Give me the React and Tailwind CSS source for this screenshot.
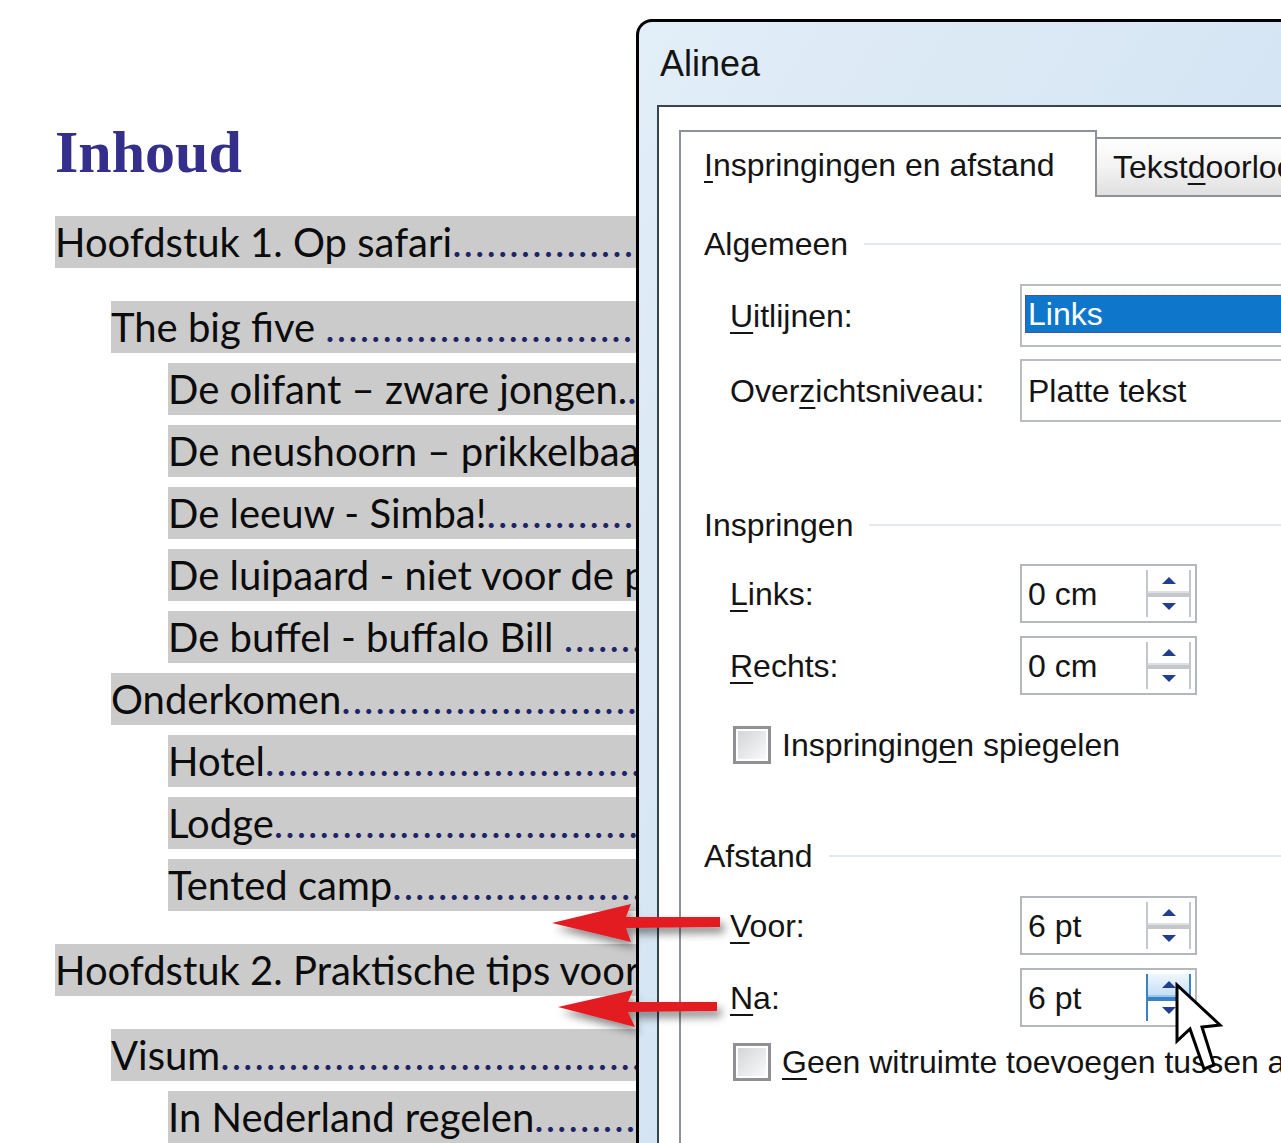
import React from 'react';

const tocItems = [
  { text: 'Hoofdstuk 1. Op safari', level: 0 },
  { text: 'The big five\u00a0', level: 1 },
  { text: 'De olifant – zware jongen.', level: 2 },
  { text: 'De neushoorn – prikkelbaar', level: 2 },
  { text: 'De leeuw - Simba!', level: 2 },
  { text: 'De luipaard - niet voor de poes', level: 2 },
  { text: 'De buffel - buffalo Bill\u00a0', level: 2 },
  { text: 'Onderkomen', level: 1 },
  { text: 'Hotel', level: 2 },
  { text: 'Lodge', level: 2 },
  { text: 'Tented camp', level: 2 },
  { text: 'Hoofdstuk 2. Praktische tips voor onderweg', level: 0 },
  { text: 'Visum', level: 1 },
  { text: 'In Nederland regelen', level: 2 },
];

const indent = ['ml-0', 'ml-[56px]', 'ml-[113px]'];

const Mn = ({ children }) => (
  <span className="underline decoration-[2px] underline-offset-[5px]">{children}</span>
);

const Toc = () => (
  <div className="w-[636px] shrink-0 overflow-hidden pl-[55px] pt-[122px]">
    <h1 className="text-[60px] leading-none font-bold text-[#352f8c] font-['Liberation_Serif',serif]">
      Inhoud
    </h1>
    <div className="flex flex-col font-['Lato',sans-serif] text-[40px] leading-none text-[#0c0c0c]">
      {tocItems.map((item, i) => {
        const prev = tocItems[i - 1];
        const wide = i === 0 || item.level === 0 || (prev && prev.level === 0);
        return (
          <div
            key={i}
            className={`h-[52px] flex items-center bg-[#cbcbcb] whitespace-nowrap overflow-hidden ${indent[item.level]} ${
              i === 0 ? 'mt-[34px]' : wide ? 'mt-[33px]' : 'mt-[10px]'
            }`}
          >
            <span>{item.text}</span>
            <span className="text-[#1e2466] tracking-[2px]">
              ..............................................
            </span>
          </div>
        );
      })}
    </div>
  </div>
);

const Spinner = ({ hover }) => (
  <div
    className={`h-full w-[45px] flex flex-col border-x-2 ${
      hover ? 'border-[#3b82c4]' : 'border-[#c4c8cc]'
    }`}
  >
    <div
      className={`flex-1 flex items-center justify-center border-b-2 ${
        hover ? 'bg-linear-to-b from-[#eef6fd] to-[#c6e0f6] border-[#9cc6ea]' : 'border-[#dde1e5]'
      }`}
    >
      <svg width="14" height="7" viewBox="0 0 14 7">
        <polygon points="0,7 7,0 14,7" fill="#20408f" />
      </svg>
    </div>
    <div className={`h-[4px] ${hover ? 'bg-[#3b82c4]' : 'bg-[#c4c8cc]'}`} />
    <div className="flex-1 flex items-center justify-center">
      <svg width="14" height="8" viewBox="0 0 14 8">
        <polygon points="0,0 14,0 7,7" fill="#20408f" />
      </svg>
    </div>
  </div>
);

const SpinBox = ({ value, hover }) => (
  <div className="h-full w-[177px] border-2 border-[#b4b8bd] flex items-center pl-[6px] pr-[4px] py-[4px]">
    <span className="flex-1">{value}</span>
    <Spinner hover={hover} />
  </div>
);

const Section = ({ title, className }) => (
  <div className={`h-[30px] flex items-center ${className}`}>
    <span>{title}</span>
    <div className="ml-[16px] h-[2px] flex-1 bg-[#e1e8f0]" />
  </div>
);

const Field = ({ label, className, children }) => (
  <div className={`flex items-center pl-[26px] ${className}`}>
    <div className="w-[290px] whitespace-nowrap">{label}</div>
    {children}
  </div>
);

const CheckRow = ({ className, children }) => (
  <div className={`h-[38px] flex items-center pl-[29px] whitespace-nowrap ${className}`}>
    <div className="w-[38px] h-[38px] shrink-0 border-[3px] border-[#8f9194] bg-white p-[2px]">
      <div className="w-full h-full bg-linear-to-br from-[#d3d5d8] to-[#fafafa]" />
    </div>
    <span className="ml-[11px]">{children}</span>
  </div>
);

const Dialog = () => (
  <div className="w-[760px] h-[1200px] shrink-0 mt-[19px] rounded-tl-[16px] border-l-[3px] border-t-[3px] border-black bg-linear-to-br from-[#e2eef8] via-[#d4e4f2] to-[#c3d6e9] flex flex-col font-['Liberation_Sans',Arial,sans-serif] text-[#141414]">
    <div className="h-[83px] flex items-center pl-[21px] text-[36px]">Alinea</div>
    <div className="ml-[18px] flex-1 border-l-2 border-t-2 border-[#37454f] bg-white pl-[20px] pt-[23px] flex flex-col text-[32px] leading-none">
      <div className="flex items-end">
        <div className="relative z-10 -mb-[2px] h-[67px] w-[418px] shrink-0 border-2 border-b-0 border-[#8c9298] bg-white flex items-center pl-[23px] whitespace-nowrap">
          <span><Mn>I</Mn>nspringingen en afstand</span>
        </div>
        <div className="h-[58px] w-[320px] shrink-0 border-t-2 border-r-2 border-[#8c9298] bg-linear-to-b from-white via-[#f3f3f3] to-[#e0e0e0] flex items-center pl-[16px] whitespace-nowrap">
          <span>Tekst<Mn>d</Mn>oorloop en pagina-einden</span>
        </div>
      </div>
      <div className="flex-1 border-t-2 border-l-2 border-[#8c9298] bg-white pl-[23px] flex flex-col">
        <Section title="Algemeen" className="mt-[32px]" />
        <Field label={<><Mn>U</Mn>itlijnen:</>} className="mt-[25px] h-[63px]">
          <div className="h-full w-[300px] shrink-0 border-2 border-[#b9bdc2] pl-[3px] pt-[9px] pb-[12px]">
            <div className="h-full bg-[#0e77cb] border border-dotted border-[#7b3a63] flex items-center pl-[2px] text-white">
              Links
            </div>
          </div>
        </Field>
        <Field label={<>Over<Mn>z</Mn>ichtsniveau:</>} className="mt-[12px] h-[63px]">
          <div className="h-full w-[300px] shrink-0 border-2 border-[#b9bdc2] flex items-center pl-[6px]">
            Platte tekst
          </div>
        </Field>
        <Section title="Inspringen" className="mt-[88px]" />
        <Field label={<><Mn>L</Mn>inks:</>} className="mt-[24px] h-[59px]">
          <SpinBox value="0 cm" />
        </Field>
        <Field label={<><Mn>R</Mn>echts:</>} className="mt-[13px] h-[59px]">
          <SpinBox value="0 cm" />
        </Field>
        <CheckRow className="mt-[31px]">
          Inspringing<Mn>e</Mn>n spiegelen
        </CheckRow>
        <Section title="Afstand" className="mt-[77px]" />
        <Field label={<><Mn>V</Mn>oor:</>} className="mt-[25px] h-[59px]">
          <SpinBox value="6 pt" />
        </Field>
        <Field label={<><Mn>N</Mn>a:</>} className="mt-[13px] h-[59px]">
          <SpinBox value="6 pt" hover />
        </Field>
        <CheckRow className="mt-[16px]">
          <Mn>G</Mn>een witruimte toevoegen tussen alinea's met dezelfde stijl
        </CheckRow>
      </div>
    </div>
  </div>
);

export default function App() {
  return (
    <div className="relative w-[1281px] h-[1143px] overflow-hidden bg-white flex">
      <Toc />
      <Dialog />

      {/* red callout arrows */}
      <svg className="absolute left-[540px] top-[895px]" width="200" height="150" viewBox="0 0 200 150">
        <defs>
          <filter id="sh" x="-20%" y="-40%" width="150%" height="190%">
            <feDropShadow dx="4" dy="6" stdDeviation="4" floodColor="#000" floodOpacity="0.45" />
          </filter>
        </defs>
        <g fill="#e31b23" filter="url(#sh)">
          <polygon points="12,28 91,9 86,22 180,22 180,32 86,33 91,47" />
          <polygon points="18,112 93,95 88,107 177,107 177,116 88,117 95,132" />
        </g>
      </svg>

      {/* mouse pointer */}
      <svg className="absolute left-[1174px] top-[982px]" width="52" height="95" viewBox="0 0 52 95">
        <polygon
          points="3,3 3,59 16,47 30,87 40,83 28,45 46,43"
          fill="#fff"
          stroke="#000"
          strokeWidth="3"
          strokeLinejoin="miter"
        />
      </svg>
    </div>
  );
}
